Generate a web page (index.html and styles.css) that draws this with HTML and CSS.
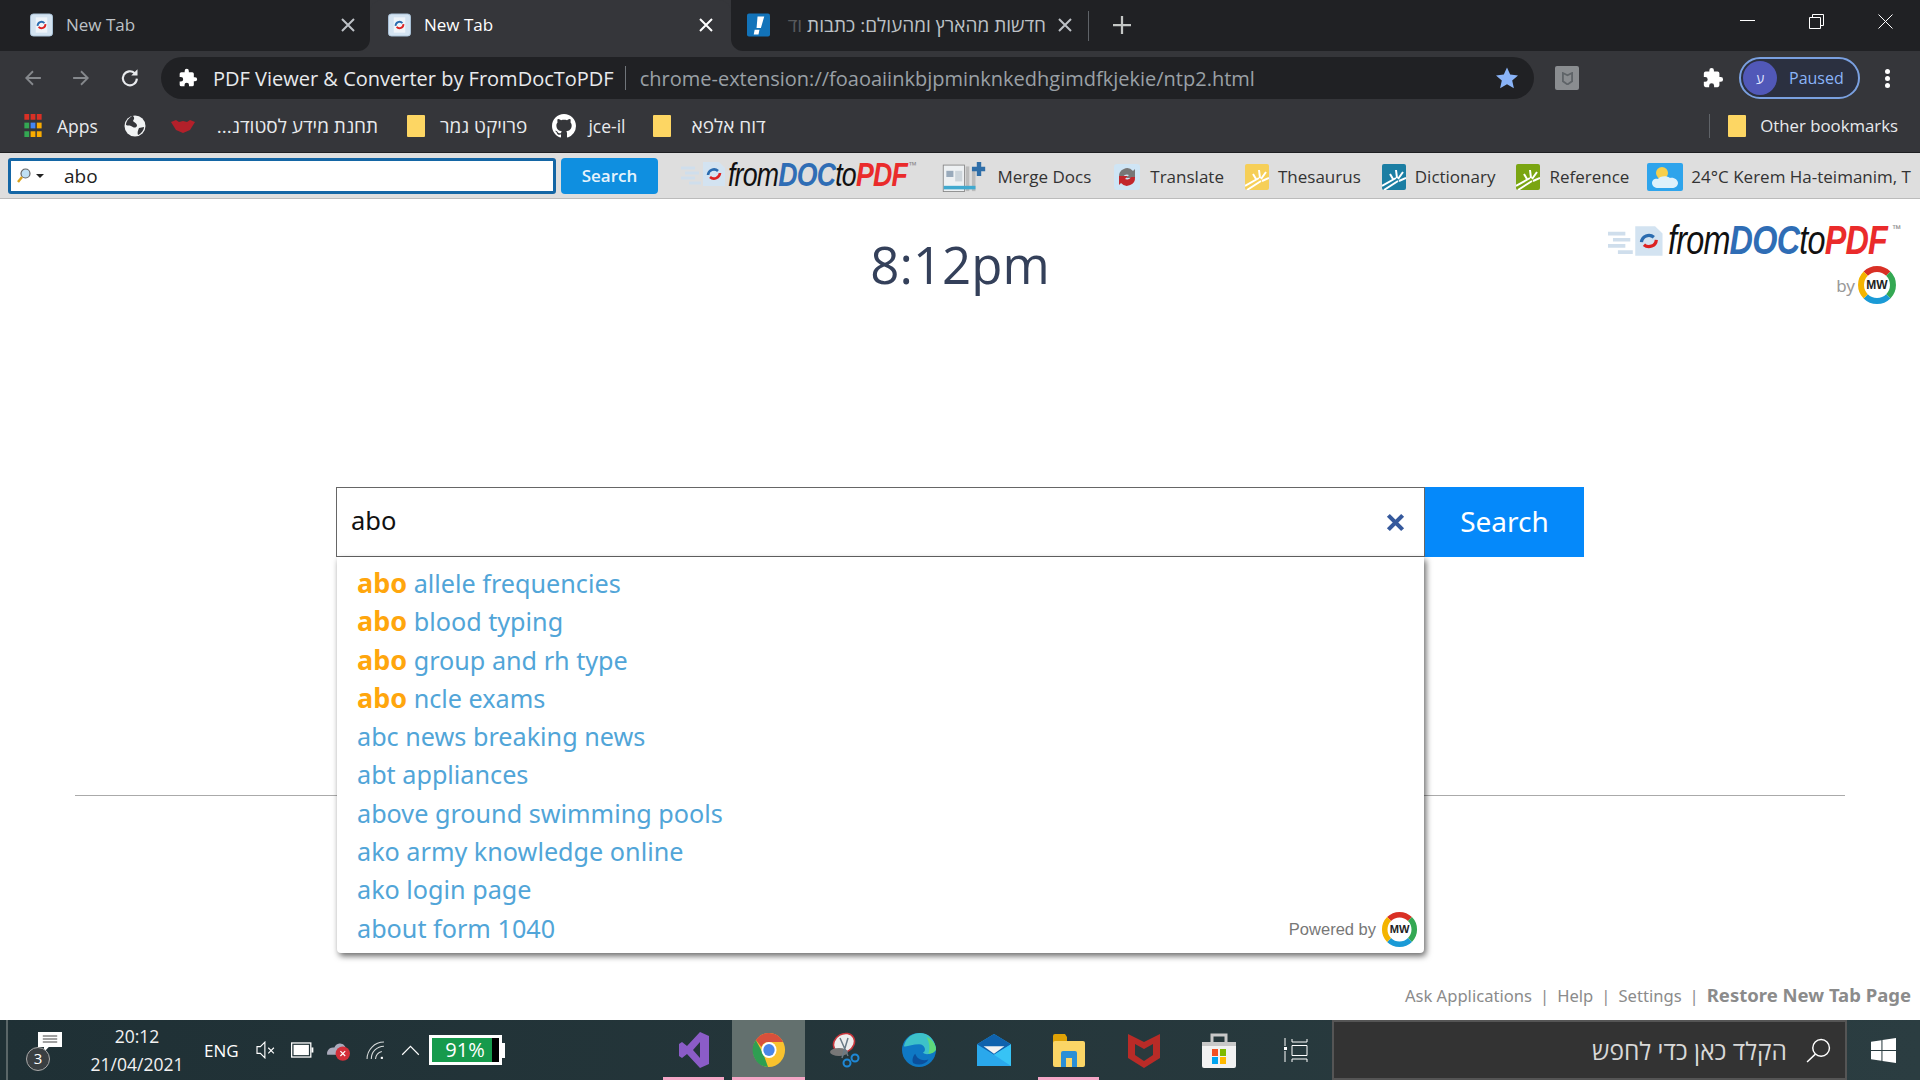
FILE: index.html
```html
<!DOCTYPE html>
<html lang="en">
<head>
	<meta charset="UTF-8">
	<title>New Tab</title>
	<link rel="stylesheet" href="styles.css">
</head>
<body>
	<div class="screen">
		<div class="tabstrip">
			<div class="tab first">
				<svg class="fav" viewBox="0 0 24 24"><rect x=".5" y=".5" width="23" height="23" rx="3" fill="#d3e3f1" stroke="#a9c2d8"/><rect x="6" y="4" width="12" height="16" fill="#eef4f9"/><path d="M8 13a4 4 0 0 1 7-3" fill="none" stroke="#2b6cb0" stroke-width="2"/><path d="M16 11a4 4 0 0 1-7 3" fill="none" stroke="#d22" stroke-width="2"/></svg>
				<span class="tab-title">New Tab</span>
				<svg class="tab-x" viewBox="0 0 14 14"><path d="M1 1l12 12M13 1L1 13" stroke="currentColor" stroke-width="2"/></svg>
			</div>
			<div class="tab on">
				<svg class="fav" viewBox="0 0 24 24"><rect x=".5" y=".5" width="23" height="23" rx="3" fill="#d3e3f1" stroke="#a9c2d8"/><rect x="6" y="4" width="12" height="16" fill="#eef4f9"/><path d="M8 13a4 4 0 0 1 7-3" fill="none" stroke="#2b6cb0" stroke-width="2"/><path d="M16 11a4 4 0 0 1-7 3" fill="none" stroke="#d22" stroke-width="2"/></svg>
				<span class="tab-title">New Tab</span>
				<svg class="tab-x" viewBox="0 0 14 14"><path d="M1 1l12 12M13 1L1 13" stroke="currentColor" stroke-width="2"/></svg>
			</div>
			<div class="tab third">
				<svg class="fav" viewBox="0 0 24 24"><rect width="24" height="24" rx="2" fill="#1273b9"/><path d="M11 3h7l-3.500 12H10zM8 17h5l-1 5H7z" fill="#fff"/></svg>
				<span class="tab-title heb" dir="rtl">חדשות מהארץ ומהעולם: כתבות <span class="fade">וד</span></span>
				<svg class="tab-x" viewBox="0 0 14 14"><path d="M1 1l12 12M13 1L1 13" stroke="currentColor" stroke-width="2"/></svg>
			</div>
			<div class="tab-sep"></div>
			<svg class="newtab" viewBox="0 0 16 16"><path d="M8 0v16M0 8h16" stroke="#c4c7c5" stroke-width="2"/></svg>
			<div class="winbtns">
				<svg viewBox="0 0 15 15"><path d="M0 6.500h15" stroke="#fff"/></svg>
				<svg viewBox="0 0 15 15"><path d="M.5 3.500h11v11H.5zM3.500 3.500V.5h11v11h-3" fill="none" stroke="#fff"/></svg>
				<svg viewBox="0 0 15 15"><path d="M.5.5l14 14M14.500.5l-14 14" stroke="#fff"/></svg>
			</div>
		</div>

		<div class="toolbar">
			<svg class="nav" viewBox="0 0 16 16"><path d="M15 8H2M8 2L2 8l6 6" fill="none" stroke="#85888c" stroke-width="1.600"/></svg>
			<svg class="nav" viewBox="0 0 16 16"><path d="M1 8h13M8 2l6 6-6 6" fill="none" stroke="#85888c" stroke-width="1.600"/></svg>
			<svg class="nav bright" viewBox="0 0 16 16"><path d="M13.500 8.500a5.600 5.600 0 1 1-1.700-4.300" fill="none" stroke="#e8eaed" stroke-width="1.700"/><path d="M14 1v5H9z" fill="#e8eaed"/></svg>
			<div class="omnibox">
				<svg class="puzzle small" viewBox="0 0 24 24"><path d="M20.500 11H19V7a2 2 0 0 0-2-2h-4V3.500a2.500 2.500 0 0 0-5 0V5H4a2 2 0 0 0-2 2v3.800h1.500a2.700 2.700 0 0 1 0 5.400H2V20a2 2 0 0 0 2 2h3.800v-1.500a2.700 2.700 0 0 1 5.400 0V22H17a2 2 0 0 0 2-2v-4h1.500a2.500 2.500 0 0 0 0-5z" fill="#fff"/></svg>
				<span class="omni-title">PDF Viewer &amp; Converter by FromDocToPDF</span>
				<span class="omni-sep"></span>
				<span class="omni-url">chrome-extension://foaoaiinkbjpminknkedhgimdfkjekie/ntp2.html</span>
				<svg class="star" viewBox="0 0 24 24"><path d="M12 1.500l3.200 7.100 7.800.8-5.800 5.200 1.700 7.700L12 18.300l-6.900 4 1.700-7.700L1 9.400l7.800-.8z" fill="#8ab4f8"/></svg>
			</div>
			<div class="ext-mcafee"><svg viewBox="0 0 12 14"><path d="M1 1l5 2.500L11 1v9l-5 3.500L1 10z" fill="none" stroke="#5f6468" stroke-width="2"/></svg></div>
			<svg class="puzzle" viewBox="0 0 24 24"><path d="M20.500 11H19V7a2 2 0 0 0-2-2h-4V3.500a2.500 2.500 0 0 0-5 0V5H4a2 2 0 0 0-2 2v3.800h1.500a2.700 2.700 0 0 1 0 5.400H2V20a2 2 0 0 0 2 2h3.800v-1.500a2.700 2.700 0 0 1 5.400 0V22H17a2 2 0 0 0 2-2v-4h1.500a2.500 2.500 0 0 0 0-5z" fill="#fff"/></svg>
			<div class="profile">
				<span class="avatar" dir="rtl">ע</span>
				<span class="paused">Paused</span>
			</div>
			<div class="kebab"><i></i><i></i><i></i></div>
		</div>

		<div class="bookmarks">
			<div class="bm">
				<svg class="apps" viewBox="0 0 18 24"><rect width="5" height="6" fill="#d93025"/><rect x="6.500" width="5" height="6" fill="#d93025"/><rect x="13" width="5" height="6" fill="#d93025"/><rect y="9" width="5" height="6" fill="#34a853"/><rect x="6.500" y="9" width="5" height="6" fill="#4285f4"/><rect x="13" y="9" width="5" height="6" fill="#f9ab00"/><rect y="18" width="5" height="6" fill="#34a853"/><rect x="6.500" y="18" width="5" height="6" fill="#f9ab00"/><rect x="13" y="18" width="5" height="6" fill="#f9ab00"/></svg>
				<span>Apps</span>
			</div>
			<svg class="globe" viewBox="0 0 22 22"><circle cx="11" cy="11" r="10.500" fill="#f1f3f4"/><path d="M8 1c-3 2-6 5-6 9 2 1 3 0 5 1s4 3 6 0c0-3-2-3-4-5 1-2 2-3 0-5zM15 13l5-1c0 3-3 7-6 8-1-2 0-5 1-7z" fill="#35363a"/></svg>
			<div class="bm lip-item">
				<svg class="lips" viewBox="0 0 24 14"><path d="M0 3l5-2 3 2 4-1 4 1 3-2 5 2-5 8-7 3-7-3z" fill="#b3202a"/></svg>
				<span class="heb-bm" dir="rtl">תחנת מידע לסטודנ...</span>
			</div>
			<div class="bm folder-item">
				<span class="folder"></span>
				<span class="heb-bm" dir="rtl">פרויקט גמר</span>
			</div>
			<div class="bm git-item">
				<svg class="octo" viewBox="0 0 16 16"><path fill="#fff" d="M8 0C3.580 0 0 3.580 0 8c0 3.540 2.290 6.530 5.470 7.590.4.070.55-.17.55-.38 0-.19-.01-.82-.01-1.490-2.010.37-2.530-.49-2.690-.94-.09-.23-.48-.94-.82-1.130-.28-.15-.68-.52-.01-.53.63-.01 1.080.58 1.230.82.720 1.210 1.870.87 2.330.66.070-.52.280-.87.510-1.070-1.780-.2-3.640-.89-3.640-3.950 0-.87.310-1.590.820-2.150-.08-.2-.36-1.020.08-2.120 0 0 .67-.21 2.200.82.640-.18 1.320-.27 2-.27s1.360.09 2 .27c1.530-1.040 2.200-.82 2.200-.82.440 1.100.16 1.920.08 2.120.51.560.82 1.270.82 2.150 0 3.070-1.870 3.750-3.650 3.950.290.250.540.730.540 1.480 0 1.070-.01 1.930-.01 2.200 0 .210.150.460.550.380A8.010 8.010 0 0 0 16 8c0-4.420-3.580-8-8-8z"/></svg>
				<span>jce-il</span>
			</div>
			<div class="bm last-item">
				<span class="folder"></span>
				<span class="heb-bm" dir="rtl">דוח אלפא</span>
			</div>
			<div class="bm-right">
				<span class="bm-sep"></span>
				<span class="folder"></span>
				<span>Other bookmarks</span>
			</div>
		</div>

		<div class="extbar">
			<div class="ext-search">
				<svg class="mag" viewBox="0 0 14 16"><circle cx="8.500" cy="5.500" r="4.500" fill="#bfe0f4" stroke="#666" stroke-width="1.200"/><path d="M5 9l-4 5" stroke="#d9a21c" stroke-width="2.400"/></svg>
				<span class="caret"></span>
				<span class="ext-query">abo</span>
			</div>
			<div class="ext-btn">Search</div>
			<div class="brand small">
				<svg class="brand-mark" viewBox="0 0 46 28"><path d="M0 8h14M4 13h14M0 18h14M8 23h12" stroke="#cfdeec" stroke-width="3"/><path d="M22 2h16l6 6v18H22z" fill="#d3e3f1"/><path d="M27 15a6 6 0 0 1 10-4" fill="none" stroke="#2b6cb0" stroke-width="2.600"/><path d="M39 13a6 6 0 0 1-10 4" fill="none" stroke="#d22" stroke-width="2.600"/></svg>
				<span class="brand-text">from<b>DOC</b>to<em>PDF</em></span><sup>™</sup>
			</div>
			<div class="ext-item merge">
				<svg viewBox="0 0 48 34"><rect x=".5" y="3.500" width="24" height="30" fill="#eef1f3" stroke="#888"/><rect x="26" y="5" width="4" height="28" fill="#bbb"/><rect x="33" y="6" width="4" height="27" fill="#bbb"/><rect x="1" y="27" width="36" height="4" fill="#40a9cf"/><rect x="4" y="10" width="8" height="7" fill="#9ab"/><rect x="14" y="10" width="8" height="12" fill="#cdd5db"/><path d="M41 0v16M33 8h15" stroke="#2f6ea8" stroke-width="5"/></svg>
				<span>Merge Docs</span>
			</div>
			<div class="ext-item trans">
				<svg viewBox="0 0 26 26"><rect width="26" height="26" rx="3" fill="#cfe5f5"/><path d="M5 13a8 8 0 0 1 14-6l2-2v9h-9l3-3a4.500 4.500 0 0 0-6 2z" fill="#777"/><path d="M21 13a8 8 0 0 1-14 6l-2 2v-9h9l-3 3a4.500 4.500 0 0 0 6-2z" fill="#c2272d"/></svg>
				<span>Translate</span>
			</div>
			<div class="ext-item">
				<svg viewBox="0 0 24 26"><rect width="24" height="26" rx="2" fill="#f6cf58"/><path d="M0 22L14 14M2 26L16 17M8 10l3 5M14 6l1 8M21 8l-5 7M24 14l-7 3" stroke="#fff" stroke-width="2"/></svg>
				<span>Thesaurus</span>
			</div>
			<div class="ext-item">
				<svg viewBox="0 0 24 26"><rect width="24" height="26" rx="2" fill="#1b7ea3"/><path d="M0 22L14 14M2 26L16 17M8 10l3 5M14 6l1 8M21 8l-5 7M24 14l-7 3" stroke="#fff" stroke-width="2"/></svg>
				<span>Dictionary</span>
			</div>
			<div class="ext-item">
				<svg viewBox="0 0 24 26"><rect width="24" height="26" rx="2" fill="#7aa512"/><path d="M0 22L14 14M2 26L16 17M8 10l3 5M14 6l1 8M21 8l-5 7M24 14l-7 3" stroke="#fff" stroke-width="2"/></svg>
				<span>Reference</span>
			</div>
			<div class="ext-item weather">
				<svg viewBox="0 0 36 28"><rect width="36" height="28" rx="2" fill="#2ea4ec"/><circle cx="15" cy="10" r="6" fill="#f7cf4c"/><path d="M5 20c0-4 4-5 6-4 1-3 9-4 12-1 4-1 8 2 8 5 0 3-3 5-6 5H11c-3 0-6-2-6-5z" fill="#dff1fb"/></svg>
				<span>24°C Kerem Ha-teimanim, T</span>
			</div>
		</div>

		<div class="page">
			<div class="page-top">
				<div class="clock">8:12pm</div>
				<div class="page-logo">
					<div class="brand">
						<svg class="brand-mark" viewBox="0 0 46 28"><path d="M0 8h14M4 13h14M0 18h14M8 23h12" stroke="#cfdeec" stroke-width="3"/><path d="M22 2h16l6 6v18H22z" fill="#d3e3f1"/><path d="M27 15a6 6 0 0 1 10-4" fill="none" stroke="#2b6cb0" stroke-width="2.600"/><path d="M39 13a6 6 0 0 1-10 4" fill="none" stroke="#d22" stroke-width="2.600"/></svg>
						<span class="brand-text">from<b>DOC</b>to<em>PDF</em></span><sup>™</sup>
					</div>
					<div class="by-mw">
						<span>by</span>
						<svg class="mw" viewBox="0 0 40 40"><circle cx="20" cy="20" r="13" fill="#fff"/><path d="M8.700 8.700a16 16 0 0 1 22.600 0" fill="none" stroke="#d93025" stroke-width="6"/><path d="M31.300 8.700a16 16 0 0 1 0 22.600" fill="none" stroke="#34a853" stroke-width="6"/><path d="M31.300 31.300a16 16 0 0 1-22.600 0" fill="none" stroke="#1a9ad6" stroke-width="6"/><path d="M8.700 31.300a16 16 0 0 1 0-22.600" fill="none" stroke="#f4b400" stroke-width="6"/><text x="20" y="24" class="mw-text">MW</text></svg>
					</div>
				</div>
			</div>

			<div class="search-area">
				<div class="rule"></div>
				<div class="search-row">
					<div class="search-col">
						<div class="search-box">
							<span class="query">abo</span>
							<svg class="clear" viewBox="0 0 16 16"><path d="M2 2l12 12M14 2L2 14" stroke="#35599c" stroke-width="3.500"/></svg>
						</div>
						<ul class="suggest">
							<li><b>abo</b> allele frequencies</li>
							<li><b>abo</b> blood typing</li>
							<li><b>abo</b> group and rh type</li>
							<li><b>abo</b> ncle exams</li>
							<li>abc news breaking news</li>
							<li>abt appliances</li>
							<li>above ground swimming pools</li>
							<li>ako army knowledge online</li>
							<li>ako login page</li>
							<li>about form 1040</li>
							<li class="powered">
								<span>Powered by</span>
								<svg class="mw" viewBox="0 0 40 40"><circle cx="20" cy="20" r="13" fill="#fff"/><path d="M8.700 8.700a16 16 0 0 1 22.600 0" fill="none" stroke="#d93025" stroke-width="6"/><path d="M31.300 8.700a16 16 0 0 1 0 22.600" fill="none" stroke="#34a853" stroke-width="6"/><path d="M31.300 31.300a16 16 0 0 1-22.600 0" fill="none" stroke="#1a9ad6" stroke-width="6"/><path d="M8.700 31.300a16 16 0 0 1 0-22.600" fill="none" stroke="#f4b400" stroke-width="6"/><text x="20" y="24" class="mw-text">MW</text></svg>
							</li>
						</ul>
					</div>
					<div class="search-btn">Search</div>
				</div>
			</div>

			<div class="page-links">
				<span>Ask Applications</span><i>|</i><span>Help</span><i>|</i><span>Settings</span><i>|</i><span class="strong">Restore New Tab Page</span>
			</div>
		</div>

		<div class="taskbar">
			<div class="task-line"></div>
			<div class="notif">
				<svg viewBox="0 0 20 24" preserveAspectRatio="none"><path d="M0 0h20v15H9l-4 5v-5H0z" fill="#fff"/><path d="M4 4h12M4 7h12M4 10h12" stroke="#444"/></svg>
				<span class="notif-count">3</span>
			</div>
			<div class="clock-tray"><span>20:12</span><span>21/04/2021</span></div>
			<span class="lang">ENG</span>
			<svg class="tray vol" viewBox="0 0 18 16"><path d="M1 5h3l4-4v14l-4-4H1zM11 6l5 5M16 6l-5 5" fill="none" stroke="#fff"/></svg>
			<svg class="tray batt" viewBox="0 0 18 12"><rect x=".5" y=".5" width="15" height="11" fill="none" stroke="#fff"/><rect x="2" y="2" width="12" height="8" fill="#fff"/><rect x="16" y="4" width="1.500" height="4" fill="#fff"/></svg>
			<svg class="tray cloud" viewBox="0 0 20 20"><path d="M1 14a5 5 0 0 1 6-6 5 5 0 0 1 9-1v7z" fill="#aab"/><circle cx="14" cy="13" r="6" fill="#d32f3a"/><path d="M12 11l4 4M16 11l-4 4" stroke="#fff"/></svg>
			<svg class="tray wifi" viewBox="0 0 18 18"><path d="M1 17A16 16 0 0 1 17 1M5 17A12 12 0 0 1 17 5M9 17a8 8 0 0 1 6-7" fill="none" stroke="#d8dcdc"/><rect x="14" y="15" width="2" height="2" fill="#fff"/></svg>
			<svg class="tray chev" viewBox="0 0 16 10"><path d="M1 9l7-7 7 7" fill="none" stroke="#fff"/></svg>
			<div class="battery-bar">
				<div class="battery-fill">91%</div>
				<div class="battery-empty"></div>
			</div>
			<div class="battery-nub"></div>
			<div class="apps-row">
				<div class="task-app open">
					<svg viewBox="0 0 30 36"><path d="M21 0l9 4v28l-9 4L8 22l-5 4-3-2V12l3-2 5 4zM21 10l-7 8 7 8z" fill="#8b5cc7"/></svg>
				</div>
				<div class="task-app open active">
					<svg viewBox="0 0 36 36" preserveAspectRatio="none"><circle cx="18" cy="18" r="17" fill="#f9c22e"/><path d="M18 1a17 17 0 0 1 15 9H18a8 8 0 0 0-8 5L4 8a17 17 0 0 1 14-7z" fill="#d8503c"/><path d="M4 8l8 14 5 13A17 17 0 0 1 4 8z" fill="#2f9e52"/><circle cx="18" cy="18" r="8" fill="#fff"/><circle cx="18" cy="18" r="6" fill="#4a86e8"/></svg>
				</div>
				<div class="task-app">
					<svg viewBox="0 0 30 36"><ellipse cx="15" cy="11" rx="11" ry="9" transform="rotate(-30 15 11)" fill="#eee" stroke="#c8353b" stroke-width="1.500"/><ellipse cx="10" cy="20" rx="9" ry="4" fill="#777"/><path d="M11 6l8 18M19 6l-6 20" stroke="#6a7a86" stroke-width="1.500"/><circle cx="18" cy="31" r="3.500" fill="none" stroke="#1e88d6" stroke-width="2"/><circle cx="26" cy="26" r="3.500" fill="none" stroke="#1e88d6" stroke-width="2"/></svg>
				</div>
				<div class="task-app">
					<svg viewBox="0 0 36 36"><circle cx="18" cy="18" r="18" fill="#0f78c4"/><path d="M2 14C4 4 12 0 19 0c9 0 15 6 17 16-2 6-10 8-14 5 4-1 3-9-4-9-7 0-13 3-16 2z" fill="#3dc1c9"/><path d="M26 4c6 3 10 8 10 14-2 3-5 4-8 4 2-6 1-12-2-18z" fill="#5fd97a"/><path d="M14 22c2 6 8 8 14 6-3 5-10 7-16 4-2-3 0-8 2-10z" fill="#0b4f9c"/></svg>
				</div>
				<div class="task-app">
					<svg viewBox="0 0 36 34"><path d="M0 11L18 0l18 11v23H0z" fill="#2aa8ec"/><path d="M0 11L18 0l18 11-18 11z" fill="#0f62ad"/><path d="M7 13h22L18 21z" fill="#f2f2f2"/><path d="M18 22L36 11v23z" fill="#37c3f5"/></svg>
				</div>
				<div class="task-app open">
					<svg viewBox="0 0 34 34"><path d="M1 3a2 2 0 0 1 2-2h10l2 3v6H1z" fill="#dfa206"/><rect x="1" y="8" width="32" height="26" rx="2" fill="#fbd566"/><path d="M9 34V20a2 2 0 0 1 2-2h12a2 2 0 0 1 2 2v14h-5v-9h-6v9z" fill="#2b8fd6"/></svg>
				</div>
				<div class="task-app">
					<svg viewBox="0 0 32 36"><path d="M0 2l16 8 16-8v24l-16 10L0 26z" fill="#b92b27"/><path d="M7 12l9 5 9-5v11l-9 6-9-6z" fill="#2a3a3d"/></svg>
				</div>
				<div class="task-app">
					<svg viewBox="0 0 34 36"><path d="M10 10V3h14v7" fill="none" stroke="#c8c8c8" stroke-width="3"/><path d="M0 10h34v24a2 2 0 0 1-2 2H2a2 2 0 0 1-2-2z" fill="#f2f2f2"/><rect y="10" width="34" height="4" fill="#c8c8c8"/><rect x="10" y="17" width="6" height="7" fill="#f25022"/><rect x="18" y="17" width="6" height="7" fill="#7fba00"/><rect x="10" y="25" width="6" height="7" fill="#00a4ef"/><rect x="18" y="25" width="6" height="7" fill="#ffb900"/></svg>
				</div>
				<div class="task-app">
					<svg class="taskview" viewBox="0 0 24 24"><path d="M1 0v8M1 13v11" stroke="#fff"/><rect y="9" width="3" height="3" fill="#fff"/><path d="M8 1v3h15V1M8 7.500h15v10H8zM8 24v-3h15v3" fill="none" stroke="#fff"/></svg>
				</div>
			</div>
			<div class="win-search" dir="rtl">
				<svg class="win-mag" viewBox="0 0 24 24"><circle cx="14.500" cy="9.500" r="8" fill="none" stroke="#fff" stroke-width="1.400"/><path d="M9 15.500L1 23" stroke="#fff" stroke-width="1.400"/></svg>
				<span>הקלד כאן כדי לחפש</span>
			</div>
			<div class="win-start">
				<svg viewBox="0 0 24 24"><path d="M0 3.500l10-1.400v9.400H0zM11 2l13-2v11.500H11zM0 12.500h10v9.400L0 20.500zM11 12.500h13V24l-13-2z" fill="#fff"/></svg>
			</div>
		</div>
	</div>
</body>
</html>
```

FILE: styles.css
```css
*{padding:0; margin:0; list-style:none; box-sizing:border-box;}
html,body{width:1920px; height:1080px; overflow:hidden; background:#fff;}
body{font-family:"Open Sans","Noto Sans","Noto Sans CJK SC",sans-serif; color:#fff;}
.screen{width:1920px; height:1080px; display:flex; flex-direction:column;}

/* tabs */
.tabstrip{height:51px; background:#202124; display:flex; align-items:stretch; flex:none;}
.tab{display:flex; align-items:center; font-size:17px; color:#bdc1c6; background:#202124; position:relative; z-index:1;}
.tab.first{width:370px; padding:0 15px 2px 30px; border-bottom-right-radius:12px;}
.tab.on{width:361px; padding:0 18px 2px 18px; background:#35363a; color:#fff; border-radius:12px 12px 0 0; z-index:0; box-shadow:-12px 0 0 #35363a,12px 0 0 #35363a;}
.tab.third{width:357px; padding:0 16px 2px; border-bottom-left-radius:12px;}
.fav{width:23px; height:24px; flex:none; margin-right:13px;}
.third .fav{margin-right:14px;}
.tab-title{flex:1; white-space:nowrap; overflow:hidden;}
.tab-title.heb{font-size:19px; text-align:right;}
.fade{opacity:.35;}
.tab-x{width:14px; height:14px; flex:none; margin-left:12px;}
.tab-sep{width:1px; height:30px; background:#5f6368; margin-top:11px;}
.newtab{width:18px; height:18px; margin:16px 0 0 24px;}
.winbtns{margin-left:auto; display:flex; gap:54px; padding:14px 27px 0 0; align-items:flex-start;}
.winbtns svg{width:15px; height:15px;}

/* toolbar */
.toolbar{height:54px; background:#35363a; display:flex; align-items:center; padding:0 30px 0 24px; flex:none;}
.nav{width:18px; height:18px; margin-right:30px; flex:none;}
.nav.bright{margin-right:22px; width:20px; height:20px;}
.omnibox{width:1373px; height:42px; border-radius:21px; background:#202124; display:flex; align-items:center; padding:0 15px 0 17px; font-size:20px; flex:none; margin-left:-1px;}
.puzzle{width:22px; height:22px; flex:none;}
.puzzle.small{width:20px; height:20px; margin-right:15px;}
.omni-title{color:#e8eaed; white-space:nowrap;}
.omni-sep{width:1px; height:24px; background:#70757a; margin:0 14px 0 11px; flex:none;}
.omni-url{color:#9aa0a6; white-space:nowrap; flex:1;}
.star{width:24px; height:24px; flex:none;}
.ext-mcafee{width:24px; height:24px; border-radius:2px; background:#8a8d90; margin-left:21px; display:flex; align-items:center; justify-content:center; flex:none;}
.ext-mcafee svg{width:11px; height:13px;}
.toolbar > .puzzle{margin-left:auto; margin-right:15px;}
.profile{width:121px; height:42px; border:2px solid #7aa0e0; border-radius:21px; background:#2b3040; display:flex; align-items:center; padding-left:2px; flex:none;}
.avatar{width:34px; height:34px; border-radius:50%; background:#5158b8; color:#dfe3ff; font-size:14px; display:flex; align-items:center; justify-content:center; margin-right:12px; flex:none;}
.paused{font-size:16px; color:#8ab4f8;}
.kebab{width:5px; display:flex; flex-direction:column; gap:2px; margin-left:25px; flex:none;}
.kebab i{width:5px; height:5px; border-radius:50%; background:#fff; display:block;}

/* bookmarks */
.bookmarks{height:48px; background:#35363a; display:flex; align-items:center; padding:0 21px 6px 23px; font-size:17.500px; color:#e8eaed; flex:none; border-bottom:1px solid #1e1f22;}
.bm{display:flex; align-items:center; gap:14px; margin-right:26px; white-space:nowrap;}
.lip-item{gap:22px; margin-right:29px;}
.folder-item{gap:15px; margin-right:25px;}
.git-item{gap:12px; margin-right:28px;}
.last-item{gap:20px;}
.heb-bm{font-size:19px;}
.apps{width:20px; height:23px;}
.globe{width:22px; height:22px; margin-right:25px;}
.lips{width:24px; height:14px;}
.folder{width:18px; height:22px; background:#fdd663; border-radius:1px; display:block; flex:none;}
.octo{width:24px; height:24px;}
.bm-right{margin-left:auto; display:flex; align-items:center; gap:14px; margin-right:1px; white-space:nowrap; font-size:16.800px;}
.bm-sep{width:1px; height:24px; background:#5f6368; margin-right:4px;}

/* extension bar */
.extbar{height:46px; background:#dedede; border-bottom:1px solid #bbb; display:flex; align-items:center; padding:0 0 0 8px; color:#333; font-size:17px; flex:none; overflow:hidden; white-space:nowrap;}
.ext-search{width:548px; height:36px; background:#fff; border:3px solid #1466a5; border-radius:3px; display:flex; align-items:center; padding-left:6px; font-size:19px; color:#222; flex:none;}
.mag{width:14px; height:16px; flex:none;}
.caret{border:4px solid transparent; border-top-color:#222; margin:5px 0 0 5px; flex:none;}
.ext-query{margin-left:20px;}
.ext-btn{width:97px; height:36px; margin-left:5px; background:#0f8fe0; border-radius:4px; color:#e6f3fc; font-size:17px; font-weight:600; display:flex; align-items:center; justify-content:center; flex:none;}
.extbar > .brand{margin-left:23px; margin-right:23px; flex:none;}
.ext-item{display:flex; align-items:center; gap:9px; margin-right:21px; margin-top:2px; flex:none;}
.ext-item svg{width:24px; height:26px; flex:none;}
.ext-item.merge svg{width:48px; height:30px;}
.ext-item.merge{gap:10px; margin-right:23px;}
.ext-item.trans{gap:10px;}
.ext-item.trans svg{width:26px; height:26px;}
.ext-item.weather svg{width:36px; height:28px;}
.ext-item.weather{margin-right:0; margin-left:-3px; gap:8px;}

/* brand logo */
.brand{display:flex; align-items:flex-start; white-space:nowrap; line-height:1;}
.brand-mark{width:46px; height:28px; flex:none;}
.brand-text{display:block; font-family:"Liberation Sans",sans-serif; font-style:italic; font-size:33px; color:#111; letter-spacing:-1px; margin:-2px -42px 0 1px; transform:scaleX(.81); transform-origin:left;}
.brand-text b{color:#2f6db5; font-weight:700;}
.brand-text em{color:#ea2b2b; font-weight:700;}
.brand sup{font-size:10px; color:#888; margin-left:2px;}
.page-logo .brand-mark{width:57px; height:36px;}
.page-logo .brand-text{font-size:41px; margin:-3px -58px 0 3px; transform:scaleX(.79);}
.page-logo .brand sup{font-size:11px; margin-left:5px;}

/* page */
.page{flex:1; background:#fff; position:relative; display:flex; flex-direction:column; min-height:0; font-family:"Noto Sans","Open Sans",sans-serif;}
.page-top{height:198px; position:relative; flex:none;}
.clock{font-family:"Open Sans",sans-serif; font-size:51px; color:#34405a; text-align:center; padding-top:30px; line-height:70px;}
.page-logo{position:absolute; right:19px; top:24px; display:flex; flex-direction:column; align-items:flex-end;}
.by-mw{display:flex; align-items:center; gap:2px; color:#999; font-size:17px; margin:4px 4px 0 0;}
.mw{width:40px; height:40px;}
.mw-text{font-family:"Liberation Sans",sans-serif; font-size:12px; font-weight:700; text-anchor:middle; fill:#222;}

.search-area{position:relative; flex:1;}
.rule{position:absolute; left:75px; right:75px; top:398px; height:1px; background:#aaa;}
.search-row{position:absolute; left:336px; top:90px; display:flex; align-items:flex-start;}
.search-col{width:1089px;}
.search-box{height:70px; border:1px solid #666; background:#fff; display:flex; align-items:center; justify-content:space-between; padding:0 19px 0 14px;}
.query{font-size:25.500px; color:#111; margin-bottom:4px;}
.clear{width:19px; height:19px;}
.search-btn{width:159px; height:70px; padding-bottom:2px; background:#0589fa; color:#fff; font-size:28px; display:flex; align-items:center; justify-content:center; flex:none;}
.suggest{background:#fff; margin:0 1px; padding:7px 7px 0 20px; height:396px; border-radius:0 0 4px 4px; box-shadow:2px 3px 6px rgba(0,0,0,.6); position:relative; font-size:25.200px; color:#51a5d8;}
.suggest li{height:38.300px; line-height:38.300px; white-space:nowrap;}
.suggest b{color:#ffa60d; font-size:27px;}
.suggest li.powered{position:absolute; right:6px; bottom:5px; height:37px; line-height:37px; display:flex; align-items:center; gap:5px; font-family:"Liberation Sans",sans-serif; font-size:16.500px; color:#777;}
.suggest .mw{width:37px; height:37px;}
.page-links{position:absolute; right:9px; bottom:13px; font-size:16.600px; color:#8b8b8b; display:flex; align-items:baseline; gap:8px;}
.page-links i{font-style:normal;}
.page-links .strong{font-size:18.500px; font-weight:700;}

/* taskbar */
.taskbar{height:60px; background:linear-gradient(90deg,#1f3035,#2b3d41); display:flex; align-items:center; flex:none; font-family:"Open Sans","Noto Sans",sans-serif;}
.task-line{width:2px; height:60px; background:#5a6668; margin-left:6px; flex:none;}
.notif{width:36px; height:46px; position:relative; margin-left:18px; flex:none;}
.notif svg{width:24px; height:24px; position:absolute; left:12px; top:5px;}
.notif-count{position:absolute; left:0; top:20px; width:24px; height:24px; border-radius:50%; background:#3a3f42; border:1px solid #aaa; font-size:15px; line-height:21px; text-align:center;}
.clock-tray{display:flex; flex-direction:column; align-items:center; font-size:17.500px; line-height:28px; width:92px; margin-left:29px; flex:none; color:#f2f2f2;}
.lang{font-size:17px; width:34px; margin-left:21px; flex:none;}
.tray{flex:none;}
.vol{width:22px; height:18px; margin-left:17px;}
.batt{width:23px; height:16px; margin-left:14px;}
.cloud{width:24px; height:24px; margin-left:12px;}
.wifi{width:19px; height:19px; margin-left:16px;}
.chev{width:19px; height:12px; margin-left:16px;}
.battery-bar{width:73px; height:30px; border:3px solid #fff; margin-left:9px; background:#000; display:flex; flex:none;}
.battery-fill{width:60px; padding-left:6px; background:#169a4c; font-size:20px; text-align:center; line-height:24px; color:#fff;}
.battery-empty{flex:1;}
.battery-nub{width:3px; height:15px; background:#fff; flex:none;}
.apps-row{display:flex; margin-left:151px; flex:none; height:60px;}
.task-app{width:75px; height:60px; display:flex; align-items:center; justify-content:center;}
.task-app.open{background:linear-gradient(#f4a6c6,#f4a6c6) center bottom/61px 3px no-repeat;}
.task-app.active{background:linear-gradient(#f4a6c6,#f4a6c6) center bottom/73px 3px no-repeat,linear-gradient(#63706e,#63706e) center/73px 60px no-repeat;}
.task-app svg{width:34px; height:36px;}
.task-app .taskview{width:24px; height:24px; margin-left:5px;}
.win-search{width:515px; height:60px; background:#333; border:2px solid #555; margin-left:1px; display:flex; align-items:center; padding-right:14px; font-size:24.500px; color:#d8d8d8; flex:none; gap:19px;}
.win-mag{width:25px; height:25px; flex:none;}
.win-start{flex:1; display:flex; align-items:center; justify-content:center;}
.win-start svg{width:25px; height:25px;}
```
